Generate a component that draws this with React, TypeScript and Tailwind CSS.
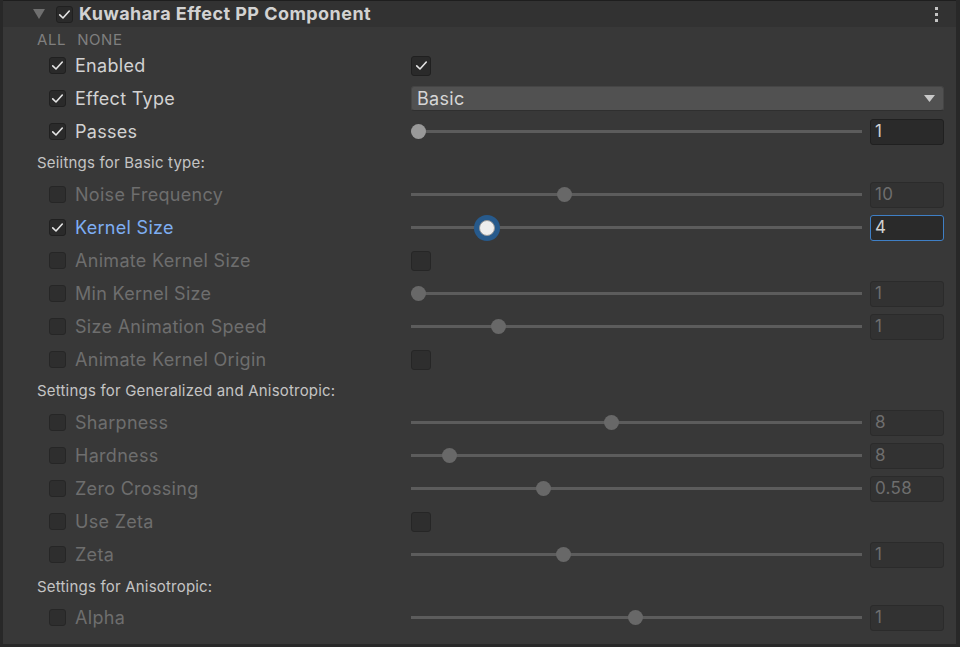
import React from "react";

type Row =
  | { kind: "header"; text: string; h: number; pt: number }
  | {
      kind: "prop";
      label: string;
      checked: boolean;
      active: boolean;
      focus?: boolean;
      control:
        | { type: "check"; checked: boolean }
        | { type: "dropdown"; value: string }
        | { type: "slider"; center: number; value: string };
    };

const rows: Row[] = [
  { kind: "prop", label: "Enabled", checked: true, active: true, control: { type: "check", checked: true } },
  { kind: "prop", label: "Effect Type", checked: true, active: true, control: { type: "dropdown", value: "Basic" } },
  { kind: "prop", label: "Passes", checked: true, active: true, control: { type: "slider", center: 418, value: "1" } },
  { kind: "header", text: "Seiitngs for Basic type:", h: 30, pt: 0 },
  { kind: "prop", label: "Noise Frequency", checked: false, active: false, control: { type: "slider", center: 564, value: "10" } },
  { kind: "prop", label: "Kernel Size", checked: true, active: true, focus: true, control: { type: "slider", center: 487, value: "4" } },
  { kind: "prop", label: "Animate Kernel Size", checked: false, active: false, control: { type: "check", checked: false } },
  { kind: "prop", label: "Min Kernel Size", checked: false, active: false, control: { type: "slider", center: 418, value: "1" } },
  { kind: "prop", label: "Size Animation Speed", checked: false, active: false, control: { type: "slider", center: 498, value: "1" } },
  { kind: "prop", label: "Animate Kernel Origin", checked: false, active: false, control: { type: "check", checked: false } },
  { kind: "header", text: "Settings for Generalized and Anisotropic:", h: 30, pt: 0 },
  { kind: "prop", label: "Sharpness", checked: false, active: false, control: { type: "slider", center: 611, value: "8" } },
  { kind: "prop", label: "Hardness", checked: false, active: false, control: { type: "slider", center: 449, value: "8" } },
  { kind: "prop", label: "Zero Crossing", checked: false, active: false, control: { type: "slider", center: 543, value: "0.58" } },
  { kind: "prop", label: "Use Zeta", checked: false, active: false, control: { type: "check", checked: false } },
  { kind: "prop", label: "Zeta", checked: false, active: false, control: { type: "slider", center: 563, value: "1" } },
  { kind: "header", text: "Settings for Anisotropic:", h: 30, pt: 3 },
  { kind: "prop", label: "Alpha", checked: false, active: false, control: { type: "slider", center: 635, value: "1" } },
];

function Check({ checked, size, dim }: { checked: boolean; size: "sm" | "lg"; dim?: boolean }) {
  const box =
    size === "sm"
      ? "w-[17px] h-[17px] rounded-[3px]"
      : "w-[20px] h-[20px] rounded-[3px]";
  return (
    <div
      className={`${box} flex items-center justify-center border ${
        dim ? "bg-[#2e2e2e] border-[#262626]" : "bg-[#2a2a2a] border-[#202020]"
      }`}
    >
      {checked && (
        <svg width="13" height="13" viewBox="0 0 12 12" fill="none">
          <path d="M1.6 6.3 L4.6 9.2 L10.4 2.8" stroke="#e4e4e4" strokeWidth="1.5" strokeLinecap="round" strokeLinejoin="round" />
        </svg>
      )}
    </div>
  );
}

function Slider({ center, value, active, focus }: { center: number; value: string; active: boolean; focus?: boolean }) {
  const left = center - 411;
  return (
    <div className="flex items-center w-full">
      <div className="relative w-[451px] h-[26px] flex items-center">
        <div className="w-full h-[3px] bg-[#5c5c5c]" />
        {focus ? (
          <div
            className="absolute top-1/2 w-[26px] h-[26px] -mt-[13px] -ml-[13px] rounded-full bg-[#275a8c] flex items-center justify-center"
            style={{ left }}
          >
            <div className="w-[16px] h-[16px] rounded-full bg-[#eeeeee] border border-[#9a9a9a]" />
          </div>
        ) : (
          <div
            className={`absolute top-1/2 w-[15px] h-[15px] -mt-[7.5px] -ml-[7.5px] rounded-full ${
              active ? "bg-[#999999]" : "bg-[#686868]"
            }`}
            style={{ left }}
          />
        )}
      </div>
      <div
        className={`ml-[8px] w-[74px] h-[26px] rounded-[3px] border flex items-center pl-[4px] text-[17px] tracking-[0.3px] ${
          focus
            ? "bg-[#2a2a2a] border-[#3f7fc5] text-[#d2d2d2]"
            : active
            ? "bg-[#2a2a2a] border-[#202020] text-[#d2d2d2]"
            : "bg-[#323232] border-[#2b2b2b] text-[#6e6e6e]"
        }`}
      >
        {value}
      </div>
    </div>
  );
}

export default function App() {
  return (
    <div
      className="w-[960px] h-[647px] bg-[#282828] pl-[3px] pr-[4px] pb-[3px] overflow-hidden"
      style={{ fontFamily: "Inter, 'Noto Sans', sans-serif" }}
    >
      <div className="w-full h-full bg-[#383838] flex flex-col">
        {/* header */}
        <div className="h-[27px] bg-[#323232] border-t border-[#1e1e1e] flex items-center relative shrink-0">
          <svg className="ml-[30px]" width="12" height="10" viewBox="0 0 12 10">
            <path d="M0 0 H12 L6 10 Z" fill="#6f6f6f" />
          </svg>
          <div className="ml-[11px]">
            <Check checked size="sm" />
          </div>
          <span className="ml-[6px] text-[18px] font-bold tracking-[0.45px] text-[#d2d2d2] leading-none">Kuwahara Effect PP Component</span>
          <div className="ml-auto mr-[18px] flex flex-col gap-[3px]">
            <div className="w-[3px] h-[3px] bg-[#c4c4c4]" />
            <div className="w-[3px] h-[3px] bg-[#c4c4c4]" />
            <div className="w-[3px] h-[3px] bg-[#c4c4c4]" />
          </div>
        </div>
        {/* all none */}
        <div className="h-[22px] flex items-center pl-[34px] text-[15px] tracking-[0.6px] text-[#7f7f7f] gap-[11px] shrink-0 pt-[4px]">
          <span>ALL</span>
          <span>NONE</span>
        </div>
        {rows.map((r, i) => {
          if (r.kind === "header") {
            return (
              <div
                key={i}
                className="flex items-center pl-[34px] text-[15px] tracking-[0.2px] text-[#c4c4c4] shrink-0"
                style={{ height: r.h, paddingTop: r.pt }}
              >
                {r.text}
              </div>
            );
          }
          const labelColor = r.focus ? "text-[#7eaef2]" : r.active ? "text-[#d2d2d2]" : "text-[#6e6e6e]";
          return (
            <div key={i} className="h-[33px] flex items-center shrink-0">
              <div className="w-[408px] flex items-center pl-[46px]">
                <Check checked={r.checked} size="sm" dim={!r.active} />
                <span className={`ml-[9px] text-[18px] tracking-[0.3px] ${labelColor}`}>{r.label}</span>
              </div>
              <div className="flex-1 pr-[12px] flex items-center">
                {r.control.type === "check" && <Check checked={r.control.checked} size="lg" dim={!r.active} />}
                {r.control.type === "dropdown" && (
                  <div className="w-full h-[25px] rounded-[3px] bg-[#515151] border border-[#454545] border-b-[#2f2f2f] flex items-center pl-[5px] pr-[8px] text-[18px] tracking-[0.3px] text-[#d6d6d6]">
                    <span>{r.control.value}</span>
                    <svg className="ml-auto" width="11" height="7" viewBox="0 0 11 7">
                      <path d="M0 0 H11 L5.5 7 Z" fill="#c8c8c8" />
                    </svg>
                  </div>
                )}
                {r.control.type === "slider" && (
                  <Slider center={r.control.center} value={r.control.value} active={r.active} focus={r.focus} />
                )}
              </div>
            </div>
          );
        })}
      </div>
    </div>
  );
}
